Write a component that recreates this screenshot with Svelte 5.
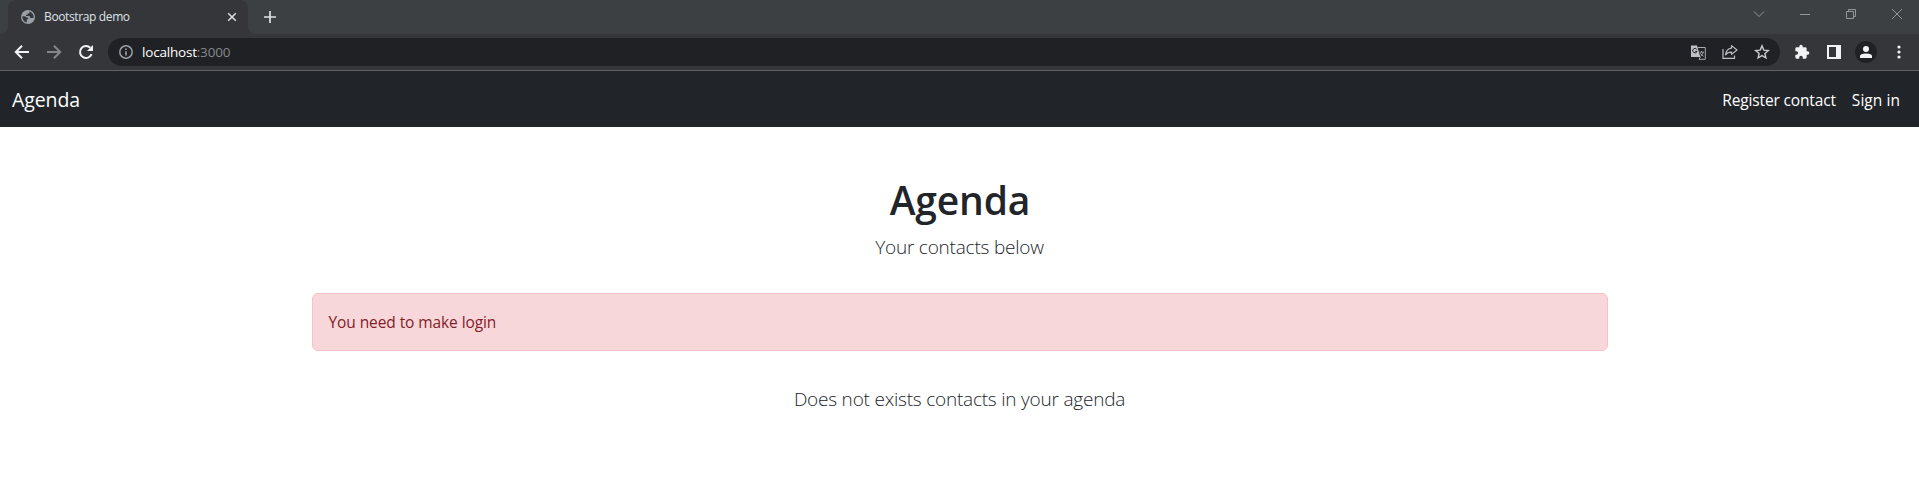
<script>
  const links = [
    { label: 'Register contact', cls: 'register' },
    { label: 'Sign in', cls: 'signin' }
  ];
</script>

<div class="window">
  <header class="tabstrip">
    <div class="lead-corner"></div>
    <div class="tab">
      <svg class="globe" width="14" height="14" viewBox="0 0 14 14">
        <circle cx="7" cy="7" r="7" fill="#9aa0a6" />
        <path d="M1.4 6.2 H4 L5.4 7.6 H7.2 V9.2 H5.8 V12.5 A5.7 5.7 0 0 1 1.4 6.2Z M8.4 1.5 V3.4 H6.6 V4.8 H5 V6 H8.6 L9.4 8 H12.5 A5.6 5.6 0 0 0 8.4 1.5Z" fill="#35363a" />
      </svg>
      <span class="title">Bootstrap demo</span>
      <svg class="close" width="10" height="10" viewBox="0 0 10 10"><path d="M1.2 1.2 8.8 8.8M8.8 1.2 1.2 8.8" stroke="#dfe1e5" stroke-width="1.5" /></svg>
    </div>
    <div class="tail-corner"></div>
    <svg class="plus" width="12" height="12" viewBox="0 0 12 12"><path d="M6 0V12M0 6H12" stroke="#dfe1e5" stroke-width="1.7" /></svg>
    <div class="controls">
      <svg width="12" height="12" viewBox="0 0 12 12"><path d="M1 3.5 6 8.5 11 3.5" /></svg>
      <svg width="12" height="12" viewBox="0 0 12 12"><path d="M1 6.5H11" /></svg>
      <svg width="12" height="12" viewBox="0 0 12 12"><path d="M1.5 3.5H8.5V10.5H1.5ZM3.5 3.5V1.5H10.5V8.5H8.5" /></svg>
      <svg width="12" height="12" viewBox="0 0 12 12"><path d="M1 1 11 11M11 1 1 11" /></svg>
    </div>
  </header>

  <div class="toolbar">
    <div class="nav-icons">
      <svg width="16" height="16" viewBox="0 0 16 16"><path d="M15 8H2.2M8 1.8 1.8 8 8 14.2" fill="none" stroke="#f1f3f4" stroke-width="2" /></svg>
      <svg width="16" height="16" viewBox="0 0 16 16"><path d="M1 8H13.8M8 1.8 14.2 8 8 14.2" fill="none" stroke="#85868a" stroke-width="2" /></svg>
      <svg width="16" height="16" viewBox="0 0 16 16"><path d="M13.6 10.2A6 6 0 1 1 12.3 3.8" fill="none" stroke="#f1f3f4" stroke-width="2" /><path d="M15 1V7H9Z" fill="#f1f3f4" /></svg>
    </div>
    <div class="omnibox">
      <svg width="14" height="14" viewBox="0 0 14 14"><circle cx="7" cy="7" r="6.2" fill="none" stroke="#9aa0a6" stroke-width="1.5" /><path d="M7 6.2V10.5M7 3.4V5" stroke="#9aa0a6" stroke-width="1.6" /></svg>
      <span class="url"><span class="host">localhost</span><span class="port">:3000</span></span>
      <div class="actions">
        <svg width="15" height="15" viewBox="0 0 15 15"><path d="M0 .5H6L9.3 12H0Z" fill="#bdc1c6" /><path d="M6.6 2.5H14.3V14.3H8L9.3 12" fill="none" stroke="#a9abae" /><path d="M5.8 4.5A2.2 2.2 0 1 0 6 6.4H4.2" fill="none" stroke="#202124" /><path d="M8.4 7.2H13M10.5 6V7.2M12.3 7.4Q11.5 10 9.4 11.3M9.4 8.2Q10.6 10.4 12.6 11.4" fill="none" stroke="#a9abae" stroke-width=".9" /></svg>
        <svg width="16" height="16" viewBox="0 0 16 16"><path d="M1 5V14.3H12.5V11.5" fill="none" stroke="#bdc1c6" stroke-width="1.2" /><path d="M9.5 1.6 15 6 9.5 10.4V8.1Q5.5 8 3.6 10.8 4.2 4.7 9.5 4.1Z" fill="none" stroke="#bdc1c6" stroke-width="1.2" stroke-linejoin="round" /></svg>
        <svg width="16" height="16" viewBox="0 0 16 16"><path d="M8 1.9 9.8 6.1 14.3 6.5 10.9 9.5 11.9 13.9 8 11.6 4.1 13.9 5.1 9.5 1.7 6.5 6.2 6.1Z" fill="none" stroke="#c8cace" stroke-width="1.4" /></svg>
      </div>
    </div>
    <div class="extras">
      <svg width="16" height="16" viewBox="0 0 24 24"><path fill="#f1f3f4" d="M20.5 11H19V7c0-1.1-.9-2-2-2h-4V3.5a2.5 2.5 0 0 0-5 0V5H4c-1.1 0-2 .9-2 2v3.8h1.5a2.7 2.7 0 0 1 0 5.4H2V20c0 1.1.9 2 2 2h3.8v-1.5a2.7 2.7 0 0 1 5.4 0V22H17c1.1 0 2-.9 2-2v-4h1.5a2.5 2.5 0 0 0 0-5z" /></svg>
      <svg width="14" height="14" viewBox="0 0 14 14"><path fill="#f1f3f4" fill-rule="evenodd" d="M0 0H14V14H0ZM2 2V12H9V2Z" /></svg>
      <span class="avatar"><svg width="12" height="12" viewBox="0 0 12 12"><circle cx="6" cy="3" r="3" fill="#f1f3f4" /><path d="M0 12V10Q0 7.5 6 7.5T12 10V12Z" fill="#f1f3f4" /></svg></span>
      <svg class="dots" width="4" height="14" viewBox="0 0 4 14" fill="#f1f3f4"><circle cx="2" cy="2" r="1.6" /><circle cx="2" cy="7" r="1.6" /><circle cx="2" cy="12" r="1.6" /></svg>
    </div>
  </div>

  <nav class="navbar">
    <span class="brand">Agenda</span>
    <div class="links">
      {#each links as link}
        <span class={link.cls}>{link.label}</span>
      {/each}
    </div>
  </nav>

  <main>
    <h1>Agenda</h1>
    <p class="lead sub">Your contacts below</p>
    <div class="alert"><span>You need to make login</span></div>
    <p class="lead empty">Does not exists contacts in your agenda</p>
  </main>
</div>

<style>
  :global(body) { margin: 0; background: #fff; }
  .window { height: 504px; overflow: hidden; font-family: "Open Sans", "Noto Sans", sans-serif; color: #212529; }
  svg { display: block; flex: none; }
  span { white-space: nowrap; }
  .tabstrip { display: flex; height: 34px; background: #3c4043; }
  .lead-corner, .tail-corner { width: 8px; background: #35363a; }
  .lead-corner::before, .tail-corner::before { content: ""; display: block; height: 34px; background: #3c4043; }
  .lead-corner::before { border-bottom-right-radius: 8px; }
  .tail-corner::before { border-bottom-left-radius: 8px; }
  .tab { width: 240px; box-sizing: border-box; display: flex; align-items: center; padding: 0 11px 0 13px; background: #35363a; border-radius: 8px 8px 0 0; }
  .title { margin-left: 9px; flex: 1; font-size: 12px; line-height: 34px; color: #dfe1e5; letter-spacing: -0.37px; }
  .plus { margin: 11px 0 0 8px; }
  .controls { margin-left: auto; display: flex; gap: 34px; padding: 8px 16px 0 0; }
  .controls svg { fill: none; stroke: #94979a; stroke-width: 1; }
  .toolbar { height: 36px; display: flex; align-items: center; background: #35363a; border-bottom: 1px solid #5f6165; }
  .nav-icons { display: flex; gap: 16px; margin-left: 14px; }
  .omnibox { margin-left: 14px; width: 1672px; height: 28px; box-sizing: border-box; border-radius: 14px; background: #202124; display: flex; align-items: center; padding: 0 10px 0 11px; }
  .url { margin-left: 9px; font-size: 13.5px; line-height: 28px; letter-spacing: -0.2px; }
  .host { color: #fff; }
  .port { color: #85888c; }
  .actions { display: flex; align-items: center; gap: 16px; margin-left: auto; }
  .extras { display: flex; align-items: center; margin-left: 14px; }
  .extras svg + svg { margin-left: 17px; }
  .avatar { width: 22px; height: 22px; margin-left: 14px; border-radius: 50%; background: #202124; display: flex; align-items: center; justify-content: center; }
  .dots { margin-left: 20px; }
  .navbar { height: 56px; box-sizing: border-box; display: flex; align-items: center; justify-content: space-between; background: #212529; color: #fff; padding: 2px 19px 0 12px; }
  .brand { font-size: 19.5px; line-height: 30px; letter-spacing: -0.1px; }
  .links { display: flex; gap: 16px; font-size: 15.5px; line-height: 24px; }
  .register { letter-spacing: -0.15px; }
  .signin { letter-spacing: 0.05px; }
  main { display: flex; flex-direction: column; align-items: center; padding-top: 48px; }
  h1 { margin: 0; padding: 2px 0 0 1px; font-size: 39px; line-height: 46px; font-weight: 600; letter-spacing: -0.15px; }
  .lead { margin: 0; font-size: 19px; line-height: 30px; font-weight: 300; letter-spacing: -0.21px; }
  .sub { margin-top: 9px; }
  .alert { width: 1296px; height: 58px; box-sizing: border-box; margin-top: 31px; border: 1px solid #f5c2c7; border-radius: 6px; background: #f8d7da; color: #842029; padding: 16px; font-size: 15.5px; line-height: 24px; letter-spacing: -0.09px; }
  .empty { margin-top: 33px; }
</style>
